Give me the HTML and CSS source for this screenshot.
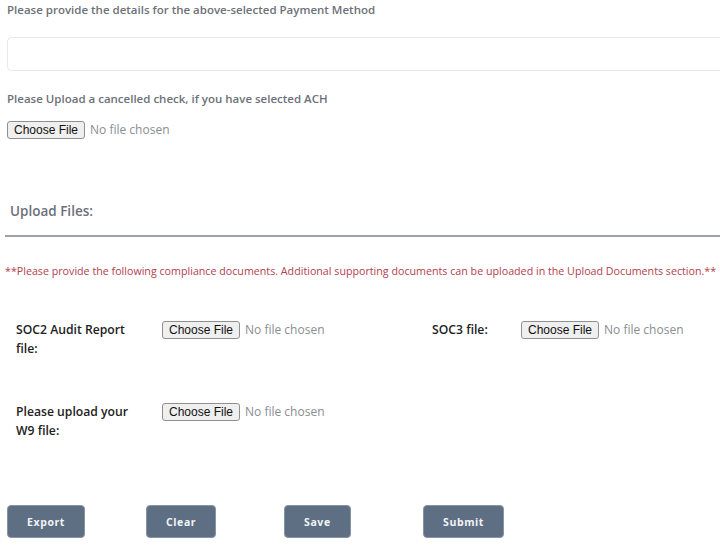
FILE: index.html
```html
<!DOCTYPE html>
<html lang="en">
<head>
	<meta charset="UTF-8">
	<title>Payment and Upload Files</title>
	<link rel="stylesheet" href="styles.css">
</head>
<body>
	<div class="page">
		<p class="label">Please provide the details for the above-selected Payment Method</p>
		<input class="details" type="text">

		<p class="label label-check">Please Upload a cancelled check, if you have selected ACH</p>
		<input class="file" type="file">

		<h3 class="section-title">Upload Files:</h3>
		<hr class="rule">

		<p class="note">**Please provide the following compliance documents. Additional supporting documents can be uploaded in the Upload Documents section.**</p>

		<div class="uploads">
			<label class="up-label">SOC2 Audit Report file:</label>
			<input class="file" type="file">
			<label class="up-label">SOC3 file:</label>
			<input class="file" type="file">

			<label class="up-label">Please upload your W9 file:</label>
			<input class="file" type="file">
		</div>

		<div class="actions">
			<div><button class="btn">Export</button></div>
			<div><button class="btn">Clear</button></div>
			<div><button class="btn">Save</button></div>
			<div><button class="btn">Submit</button></div>
		</div>
	</div>
</body>
</html>
```

FILE: styles.css
```css
html, body, div, p, h3, hr, input, button {
	padding: 0;
	margin: 0;
}
body {
	background: #fff;
	font-family: "Open Sans", "Liberation Sans", sans-serif;
	overflow: hidden;
}
.page {
	padding-left: 7px;
}
.label {
	font-size: 11.5px;
	line-height: 20px;
	font-weight: 600;
	color: #6d7178;
}
.details {
	display: block;
	margin-top: 17px;
	width: 713px;
	height: 34px;
	box-sizing: border-box;
	border: 1px solid #e8e8e8;
	border-right: 0;
	border-radius: 5px 0 0 5px;
	background: #fff;
}
.label-check {
	margin-top: 18px;
}
.file {
	display: block;
	margin-top: 12px;
	height: 18px;
	font-family: "Open Sans", sans-serif;
	font-size: 12px;
	color: #8a8d92;
}
.file::file-selector-button {
	font-family: "Liberation Sans", Arial, sans-serif;
	font-size: 12px;
	color: #111;
	background: #efefef;
	border: 1px solid #8f8f8f;
	border-radius: 3px;
	height: 18px;
	padding: 0 6px;
	margin-right: 5px;
}
.section-title {
	margin-top: 62px;
	padding-left: 3px;
	font-size: 13.5px;
	line-height: 20px;
	font-weight: 600;
	color: #6b717a;
}
.rule {
	margin: 14px 0 0 -2px;
	border: 0;
	border-top: 2px solid #9da2aa;
}
.note {
	margin: 26px 0 0 -2px;
	font-size: 10.7px;
	line-height: 16px;
	color: #b3404e;
	white-space: nowrap;
}
.uploads {
	margin-top: 41px;
	padding-left: 9px;
	display: grid;
	grid-template-columns: 146px 270px 89px 1fr;
	row-gap: 44px;
	align-items: start;
}
.uploads .file {
	margin-top: 1px;
}
.up-label {
	font-size: 12.2px;
	line-height: 19px;
	font-weight: 600;
	color: #222;
	width: 115px;
}
.actions {
	margin-top: 65px;
	display: grid;
	grid-template-columns: 139px 138px 139px 139px;
}
.btn {
	height: 33px;
	padding: 0 19px;
	background: #5e6e83;
	border: 1px solid #8794a5;
	border-radius: 4px;
	color: #f2f4f7;
	font-family: "Open Sans", sans-serif;
	font-size: 10.5px;
	font-weight: 700;
	letter-spacing: 0.6px;
}
```
